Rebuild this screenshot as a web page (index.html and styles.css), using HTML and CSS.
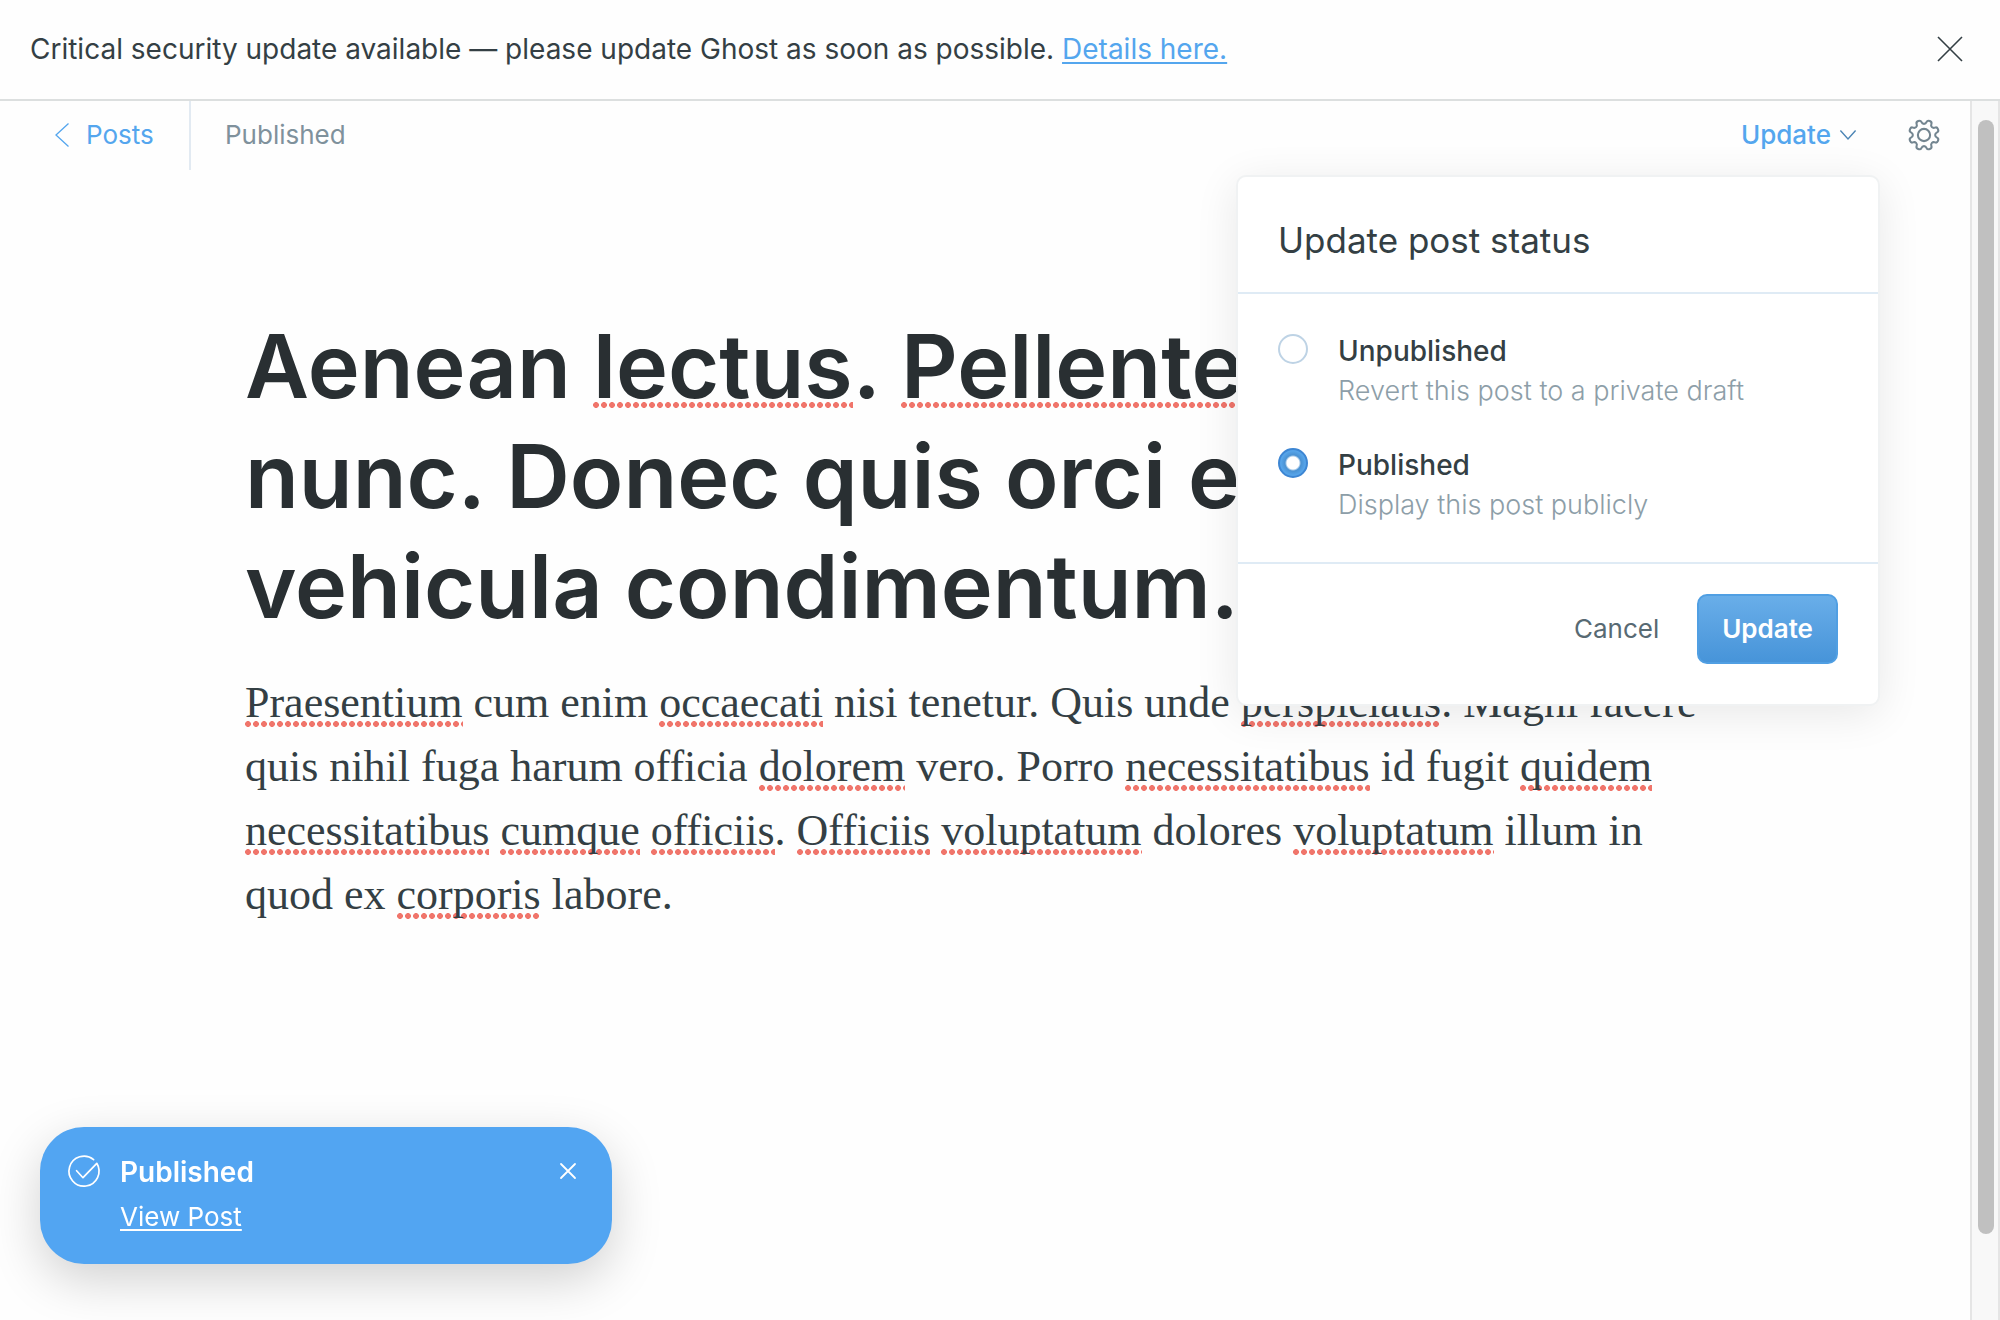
FILE: index.html
```html
<!DOCTYPE html>
<html lang="en">
<head>
<meta charset="utf-8">
<title>Editor</title>
<link rel="stylesheet" href="styles.css">
</head>
<body>
<aside class="banner">
  <p class="banner-text">Critical security update available — please update Ghost as soon as possible. <a href="#">Details here.</a></p>
  <button class="icon-button" type="button" aria-label="Dismiss">
    <svg width="24" height="24" viewBox="0 0 24 24" fill="none" stroke="currentColor" stroke-width="1.6"><path d="M0 0L24 24M24 0L0 24"/></svg>
  </button>
</aside>
<div class="workspace">
  <main class="editor">
    <header class="toolbar">
      <a class="back" href="#">
        <svg width="14" height="24" viewBox="0 0 14 24" fill="none" stroke="currentColor" stroke-width="1.3"><path d="M13.5 .5L1 12L13.5 23.5"/></svg>
        Posts
      </a>
      <span class="status">Published</span>
      <button class="update-trigger" type="button">
        Update
        <svg width="16" height="10" viewBox="0 0 16 10" fill="none" stroke="currentColor" stroke-width="1.4"><path d="M.4 .5L8 9L15.6 .5"/></svg>
      </button>
      <button class="icon-button settings" type="button" aria-label="Settings">
        <svg width="32" height="32" viewBox="-17 -17 34 34" fill="none" stroke="currentColor" stroke-width="2.2">
          <path id="cog" d="M0-11.85Q1.88-11.85 2.78-13.87Q3.67-15.88 6.16-14.85Q8.64-13.82 7.85-11.77Q7.05-9.71 8.38-8.38Q9.71-7.05 11.77-7.85Q13.82-8.64 14.85-6.16Q15.88-3.67 13.87-2.78Q11.85-1.88 11.85 0"/>
          <use href="#cog" transform="rotate(90)"/><use href="#cog" transform="rotate(180)"/><use href="#cog" transform="rotate(270)"/>
          <circle r="6.5"/>
        </svg>
      </button>
    </header>
    <article class="post">
      <h1>Aenean <span class="typo">lectus</span>. <span class="typo">Pellentesque</span> eget<br>nunc. Donec quis orci eget orci<br>vehicula condimentum.</h1>
      <p><span class="typo">Praesentium</span> cum enim <span class="typo">occaecati</span> nisi tenetur. Quis unde <span class="typo">perspiciatis</span>. Magni facere<br>quis nihil fuga harum officia <span class="typo">dolorem</span> vero. Porro <span class="typo">necessitatibus</span> id fugit <span class="typo">quidem</span><br><span class="typo">necessitatibus</span> <span class="typo">cumque</span> <span class="typo">officiis</span>. <span class="typo">Officiis</span> <span class="typo">voluptatum</span> dolores <span class="typo">voluptatum</span> illum in<br>quod ex <span class="typo">corporis</span> labore.</p>
    </article>
    <form class="popup">
      <h2>Update post status</h2>
      <div class="options">
        <div class="option">
          <input type="radio" name="status" id="unpublished">
          <label for="unpublished"><strong>Unpublished</strong><span>Revert this post to a private draft</span></label>
        </div>
        <div class="option">
          <input type="radio" name="status" id="published" checked>
          <label for="published"><strong>Published</strong><span>Display this post publicly</span></label>
        </div>
      </div>
      <footer>
        <button class="cancel" type="button">Cancel</button>
        <button class="confirm" type="button">Update</button>
      </footer>
    </form>
  </main>
  <div class="scroll-track"><div class="scroll-thumb"></div></div>
</div>
<section class="toast">
  <svg width="32" height="32" viewBox="0 0 32 32" fill="none" stroke="currentColor" stroke-width="1.7" stroke-linecap="round" stroke-linejoin="round"><path d="M8.6 15.7L15 22.7L28.8 8.3A15 15 0 1 1 25.6 4.6"/></svg>
  <div class="toast-body"><strong>Published</strong><a href="#">View Post</a></div>
  <button class="icon-button toast-close" type="button" aria-label="Close">
    <svg width="16" height="16" viewBox="0 0 16 16" fill="none" stroke="currentColor" stroke-width="1.8" stroke-linecap="round"><path d="M1 1L15 15M15 1L1 15"/></svg>
  </button>
</section>
</body>
</html>
```

FILE: styles.css
```css
* { box-sizing: border-box; }
body {
  margin: 0;
  min-height: 100vh;
  display: flex;
  flex-direction: column;
  background: #fefefe;
  color: #343f44;
  font: 26px/32px Inter, sans-serif;
}
h1, h2, p { margin: 0; }
button { padding: 0; border: 0; background: none; font: inherit; color: inherit; }
svg { display: block; flex: none; overflow: visible; }
a { color: #54a6ee; }
.banner {
  display: flex;
  justify-content: space-between;
  align-items: center;
  padding: 32px 38px 33px 30px;
  border-bottom: 2px solid #dcdfdf;
}
.banner-text { font-size: 28px; line-height: 34px; }
.banner a { text-decoration-thickness: 2px; text-underline-offset: 3px; text-decoration-skip-ink: none; }
.workspace { flex: 1; display: flex; }
.editor { position: relative; flex: 1; }
.toolbar { display: flex; align-items: center; height: 69px; padding-right: 30px; }
.toolbar > * { padding-bottom: 2px; }
.back {
  display: flex;
  align-items: center;
  gap: 17px;
  align-self: stretch;
  width: 191px;
  padding-left: 55px;
  border-right: 2px solid #e2eaf2;
  text-decoration: none;
}
.status { padding-left: 34px; color: #7f919c; }
.update-trigger {
  display: flex;
  align-items: center;
  gap: 9px;
  margin: 0 52px 0 auto;
  color: #54a6ee;
  font-weight: 500;
}
.update-trigger svg { color: #4c85b5; }
.settings { color: #738590; }
.post { max-width: 1480px; margin: 0 auto; padding: 141px 0 60px; }
.post h1 {
  color: #292f32;
  font-size: 88px;
  line-height: 110px;
  font-weight: 600;
  white-space: nowrap;
}
.post p {
  margin-top: 30px;
  font-family: "Liberation Serif", serif;
  font-size: 44px;
  line-height: 64px;
}
.typo { background: radial-gradient(circle at 3px 3px, #f0756b 2.6px, transparent 3.2px) left bottom / 8px 6px repeat-x; }
h1 .typo { background-position: left bottom 11px; }
.popup {
  position: absolute;
  top: 74px;
  right: 90px;
  width: 644px;
  border: 2px solid #f0f2f3;
  border-radius: 10px;
  background: #fff;
  box-shadow: 0 8px 44px rgba(0, 0, 0, .09);
}
.popup h2 {
  padding: 43px 40px 31px;
  border-bottom: 2px solid #dfebf5;
  font-size: 35px;
  line-height: 41px;
  font-weight: 400;
}
.options { display: grid; gap: 34px; padding: 37px 40px; border-bottom: 2px solid #dfebf5; }
.option { display: flex; gap: 30px; }
.option input {
  appearance: none;
  width: 30px;
  height: 30px;
  margin: 3px 0 0;
  border: 2px solid #bed3e5;
  border-radius: 50%;
  background: #fff;
}
.option input:checked {
  border-color: #3d86d3;
  background: radial-gradient(circle, #fff 6px, #4a92d3 8px, #56a4e9 12px);
}
.option label { display: grid; line-height: 40px; }
.option strong { font-size: 28px; font-weight: 500; }
.option label span { color: #8d9ea8; font-size: 27px; font-weight: 300; }
.popup footer { display: flex; justify-content: flex-end; gap: 38px; padding: 30px 40px 40px; }
.cancel { color: #586a73; }
.confirm {
  height: 70px;
  padding: 0 23px;
  border: 2px solid #509fe3;
  border-radius: 10px;
  background: linear-gradient(#69aee9, #4794d9);
  color: #fff;
  font-weight: 600;
}
.scroll-track {
  display: flex;
  width: 30px;
  padding: 19px 4px 86px 6px;
  border: solid #e5e5e5;
  border-width: 0 2px;
  background: #f8f8f8;
}
.scroll-thumb { flex: 1; border-radius: 8px; background: #c0c0c0; }
.toast {
  position: fixed;
  left: 40px;
  bottom: 56px;
  display: flex;
  align-items: flex-start;
  gap: 20px;
  width: 572px;
  padding: 28px 36px 31px 28px;
  border-radius: 44px;
  background: #52a5f2;
  color: #fff;
  box-shadow: 0 16px 50px rgba(0, 0, 0, .18);
}
.toast-body { display: grid; justify-items: start; gap: 12px; flex: 1; }
.toast strong { font-size: 28px; font-weight: 600; line-height: 34px; }
.toast a { color: #fff; text-decoration-thickness: 2px; text-underline-offset: 3px; }
.toast-close { padding-top: 8px; }
```
